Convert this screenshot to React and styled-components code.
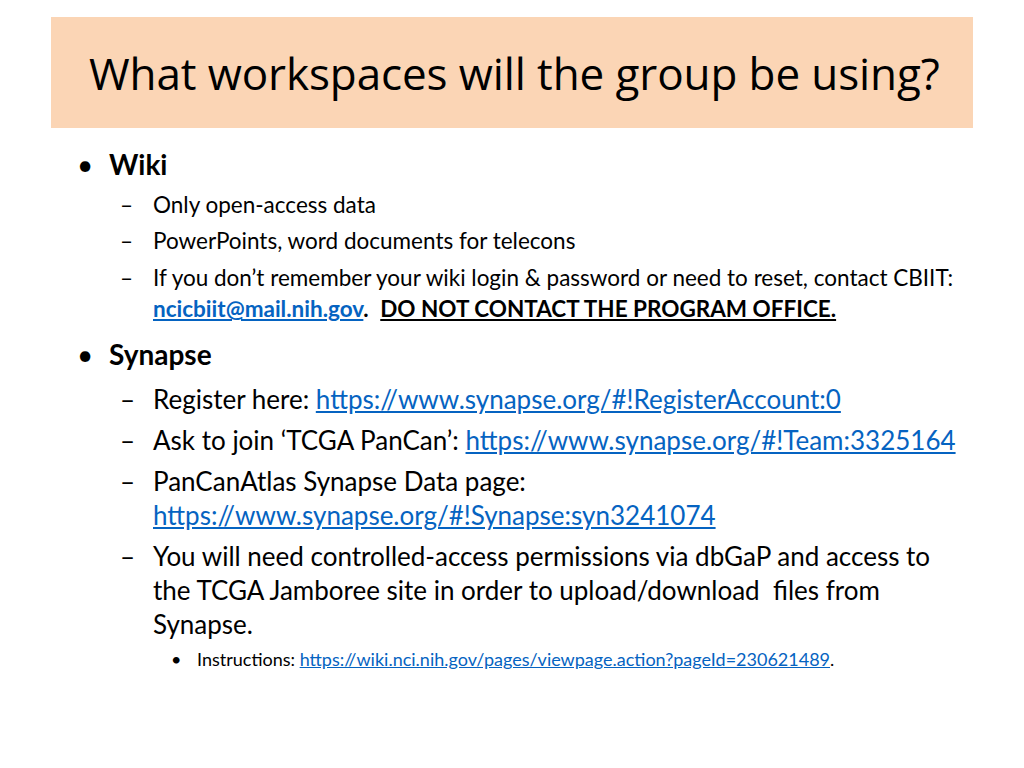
import React from "react";
import styled, { createGlobalStyle } from "styled-components";

const Global = createGlobalStyle`
  body { margin: 0; background: #fff; font-family: Lato, "Open Sans", sans-serif; color: #000; }
`;
const Slide = styled.div`width:1024px;height:768px;padding:17px 51px 0;box-sizing:border-box;`;
const Header = styled.div`
  background:#fbd5b5;height:111px;display:flex;align-items:center;padding-left:38px;
  font-size:44px;font-family:"Open Sans",sans-serif;letter-spacing:-0.1px;
`;
const List = styled.div`padding:18px 0 0 26px;`;
const L1 = styled.div`
  display:flex;font-weight:bold;font-size:28px;line-height:36px;margin-top:${p=>p.$mt||0}px;
  &::before{content:"•";width:32px;font-weight:normal;}
`;
const L2 = styled.div`
  display:flex;font-size:${p=>p.$fs}px;line-height:${p=>p.$lh}px;margin-top:${p=>p.$mt||0}px;padding-left:43px;
  &::before{content:"–";flex:0 0 33px;}
`;
const L3 = styled.div`
  display:flex;font-size:18px;line-height:24px;margin-top:6px;padding-left:94px;
  &::before{content:"•";flex:0 0 26px;}
`;
const A = styled.a`color:#0563c1;text-decoration:underline;font-weight:${p=>p.$b?"bold":"normal"};`;
const U = styled.span`font-weight:bold;text-decoration:underline;`;

export default function App(){
  return <><Global/><Slide>
    <Header>What workspaces will the group be using?</Header>
    <List>
      <L1>Wiki</L1>
      <L2 $fs={22.5} $lh={31} $mt={7}><span>Only open-access data</span></L2>
      <L2 $fs={22.5} $lh={31} $mt={5}><span>PowerPoints, word documents for telecons</span></L2>
      <L2 $fs={22.5} $lh={31} $mt={6}><span>If you don’t remember your wiki login &amp; password or need to reset, contact CBIIT: <A $b href="#">ncicbiit@mail.nih.gov</A><b>.</b>&nbsp; <U>DO NOT CONTACT THE PROGRAM OFFICE.</U></span></L2>
      <L1 $mt={12}>Synapse</L1>
      <L2 $fs={26} $lh={34} $mt={10}><span>Register here: <A href="#">https://www.synapse.org/#!RegisterAccount:0</A></span></L2>
      <L2 $fs={26} $lh={34} $mt={7}><span>Ask to join ‘TCGA PanCan’: <A href="#">https://www.synapse.org/#!Team:3325164</A></span></L2>
      <L2 $fs={26} $lh={34} $mt={7}><span>PanCanAtlas Synapse Data page:<br/><A href="#">https://www.synapse.org/#!Synapse:syn3241074</A></span></L2>
      <L2 $fs={26} $lh={34} $mt={7}><span>You will need controlled-access permissions via dbGaP and access to the TCGA Jamboree site in order to upload/download&nbsp; files from Synapse.</span></L2>
      <L3><span>Instructions: <A href="#">https://wiki.nci.nih.gov/pages/viewpage.action?pageId=230621489</A>.</span></L3>
    </List>
  </Slide></>;
}
